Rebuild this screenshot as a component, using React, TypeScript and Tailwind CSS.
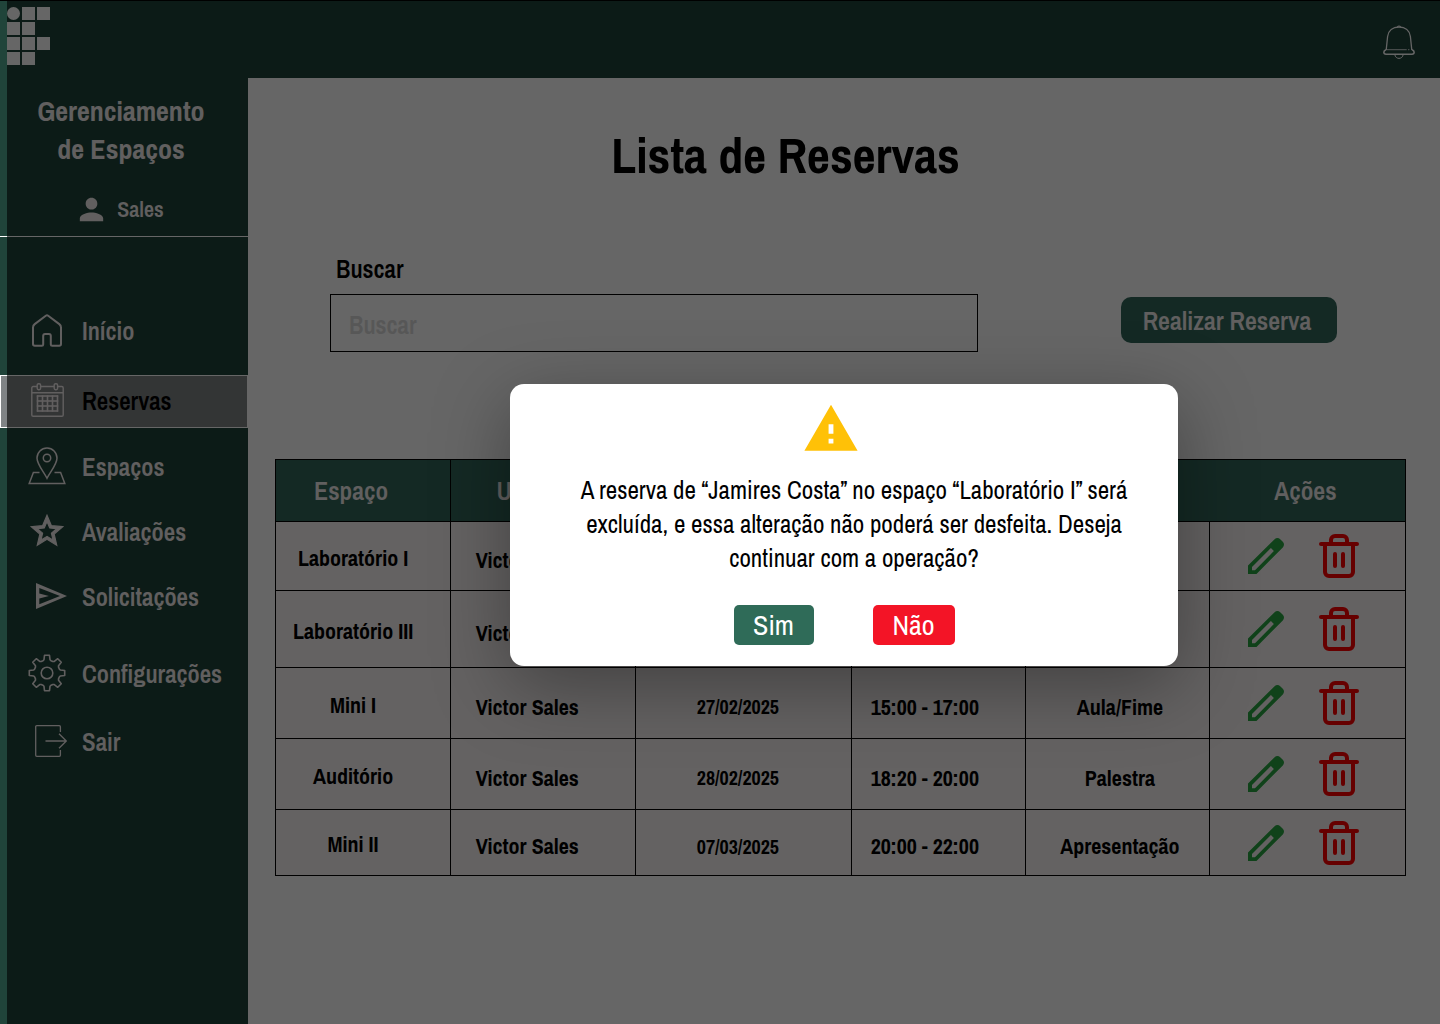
import type { ReactNode } from 'react';
import { MdPerson, MdWarning } from 'react-icons/md';

const LOGO_TILES = [
  [15, 0], [30, 0],
  [0, 15], [15, 15],
  [0, 30], [15, 30], [30, 30],
  [0, 45], [15, 45],
];

function Logo() {
  return (
    <svg width="43" height="58" viewBox="0 0 43 58" fill="currentColor" aria-hidden="true">
      <circle cx="6.5" cy="6.5" r="6.5" />
      {LOGO_TILES.map(([x, y]) => (
        <rect key={`${x}-${y}`} x={x} y={y} width="13" height="13" />
      ))}
    </svg>
  );
}

function BellIcon() {
  return (
    <svg width="32" height="34" viewBox="0 0 32 34" fill="none" stroke="currentColor" aria-hidden="true">
      <path d="M14 2.200c0-1.600 4-1.600 4 0" />
      <path d="M3.200 25 L4.600 11.500C5.300 5.600 9.800 2 16 2s10.700 3.600 11.400 9.500L28.800 25" strokeWidth="1.300" />
      <path d="M3.200 24.700h20.500M25 24.700h1.400" strokeWidth=".8" />
      <path d="M3 24.700C.2 25.700.1 29.200 3 29.200h26c2.900 0 2.800-3.500 0-4.500" strokeWidth="1.600" />
      <path d="M11.800 29.500c.6 5.200 7.800 5.200 8.400 0" />
    </svg>
  );
}

function HomeIcon() {
  return (
    <svg width="30" height="33" viewBox="0 0 30 33" fill="none" stroke="currentColor" strokeWidth="2" strokeLinejoin="round" aria-hidden="true">
      <path d="M1 13.500c0-1.500.5-2.500 1.700-3.400L13.800 1.700c.8-.6 1.600-.6 2.400 0l11.100 8.400c1.200.9 1.700 1.900 1.700 3.400V30c0 1.200-.6 1.800-1.800 1.800h-7c-1 0-1.400-.5-1.400-1.400v-8.600c0-1.300-.6-1.900-1.900-1.900h-3.800c-1.300 0-1.900.6-1.900 1.900v8.600c0 .9-.4 1.400-1.400 1.400h-7C1.600 31.800 1 31.200 1 30z" />
    </svg>
  );
}

const CALENDAR_COLUMNS = [6.5, 11.5, 16.5, 21.5, 26.5];
const CALENDAR_ROWS = [13, 18, 23, 28];

function CalendarIcon() {
  return (
    <svg width="33" height="34" viewBox="0 0 33 34" fill="none" stroke="currentColor" aria-hidden="true">
      <path d="M6 3.500H2.200c-.8 0-1.400.6-1.400 1.400v27c0 .8.6 1.300 1.400 1.300h28.600c.8 0 1.400-.5 1.400-1.300v-27c0-.8-.6-1.400-1.400-1.400h-4M10 3.500h13M1 9.800h31" strokeWidth="1.400" />
      <rect x="6.200" y=".7" width="3.400" height="6" rx="1.400" strokeWidth="1.400" />
      <rect x="23.200" y=".7" width="3.400" height="6" rx="1.400" strokeWidth="1.400" />
      {CALENDAR_COLUMNS.map((x) => (
        <path key={x} d={`M${x} 12.400V28.600`} strokeWidth="1.600" />
      ))}
      {CALENDAR_ROWS.map((y) => (
        <path key={y} d={`M5.800 ${y}H27.200`} strokeWidth="1.600" />
      ))}
    </svg>
  );
}

function MapPinIcon() {
  return (
    <svg width="38" height="38" viewBox="0 0 38 38" fill="none" stroke="currentColor" strokeWidth="1.500" aria-hidden="true">
      <path d="M19 31.300C16 25 9 17.500 9 11a10 10 0 0 1 20 0c0 6.500-7 14-10 20.300z" />
      <circle cx="19" cy="11" r="3.700" />
      <path d="M11.500 25.500H5.400L1.200 36.600h35.600l-4.200-11.100h-6.100" />
    </svg>
  );
}

function StarIcon() {
  return (
    <svg width="38" height="38" viewBox="0 0 24 24" fill="currentColor" stroke="currentColor" strokeWidth=".7" aria-hidden="true">
      <path d="M22 9.240l-7.190-.62L12 2 9.190 8.630 2 9.240l5.460 4.730L5.820 21 12 17.270 18.180 21l-1.630-7.030L22 9.240zM12 15.400l-3.760 2.270 1-4.280-3.320-2.880 4.380-.38L12 6.100l1.710 4.040 4.380.38-3.320 2.880 1 4.280L12 15.400z" />
    </svg>
  );
}

function SendIcon() {
  return (
    <svg width="31" height="26" viewBox="0 0 31 26" fill="currentColor" fillRule="evenodd" aria-hidden="true">
      <path d="M0 0l31 13L0 26zM3.300 5v5.600l9.600 2.400-9.600 2.400v5.800L24 13z" />
    </svg>
  );
}

function gearPath(center: number) {
  const points: string[] = [];
  for (let i = 0; i < 8; i += 1) {
    const a = (i * Math.PI) / 4;
    const at = (side: number, radius: number) =>
      `${(center + side * Math.cos(a) + radius * Math.sin(a)).toFixed(2)} ${(center + side * Math.sin(a) - radius * Math.cos(a)).toFixed(2)}`;
    points.push(`${i === 0 ? 'M' : 'L'}${at(-4, 12.3)}`);
    points.push(`L${at(-3, 13.3)} L${at(-2.5, 17.7)} L${at(2.5, 17.7)} L${at(3, 13.3)} L${at(4, 12.3)}`);
  }
  return `${points.join(' ')}Z`;
}

function GearIcon() {
  return (
    <svg width="38" height="38" viewBox="0 0 38 38" fill="none" stroke="currentColor" strokeWidth="1.600" strokeLinejoin="round" aria-hidden="true">
      <path d={gearPath(19)} />
      <circle cx="19" cy="19" r="5.800" />
    </svg>
  );
}

function ExitIcon() {
  return (
    <svg width="32" height="32" viewBox="0 0 32 32" fill="none" stroke="currentColor" strokeWidth="1.300" aria-hidden="true">
      <path d="M25.400 7V1.800c0-.7-.4-1.100-1.100-1.100H1.800C1.100.7.700 1.100.700 1.800v28.400c0 .7.4 1.100 1.100 1.100h22.500c.7 0 1.100-.4 1.100-1.100V25M10.500 16H31M24 8.700l7.300 7.300-7.300 7.300" />
    </svg>
  );
}

function PencilIcon() {
  return (
    <svg width="36" height="36" viewBox="0 0 36 36" fill="currentColor" fillRule="evenodd" aria-hidden="true">
      <path d="M0 36v-8.500L26.600 1.200C28.200-.3 30.600-.4 32.200 1.200l2.600 2.600c1.600 1.600 1.600 3.900 0 5.600L8.500 36zM4 32.300h3L25.900 13l-3-3L4 29z" />
    </svg>
  );
}

function TrashIcon() {
  return (
    <svg width="40" height="44" viewBox="0 0 40 44" fill="none" stroke="currentColor" strokeWidth="4" strokeLinecap="round" aria-hidden="true">
      <path d="M2 10h36M6 10v28a4 4 0 0 0 4 4h20a4 4 0 0 0 4-4V10M12 10V6a4 4 0 0 1 4-4h8a4 4 0 0 1 4 4v4M16 20v12M24 20v12" />
    </svg>
  );
}

type NavItem = { label: string; icon: ReactNode; row: string; active?: boolean };

const NAV: NavItem[] = [
  { label: 'Início', icon: <HomeIcon />, row: 'h-[65px] mb-[11px]' },
  { label: 'Reservas', icon: <CalendarIcon />, row: 'h-[53px] mb-[7px]', active: true },
  { label: 'Espaços', icon: <MapPinIcon />, row: 'h-[65px]' },
  { label: 'Avaliações', icon: <StarIcon />, row: 'h-[65px]' },
  { label: 'Solicitações', icon: <span className="pl-2"><SendIcon /></span>, row: 'h-[65px]' },
  { label: 'Configurações', icon: <GearIcon />, row: 'h-[65px] mt-3' },
  { label: 'Sair', icon: <span className="pl-2"><ExitIcon /></span>, row: 'h-[65px] mt-[3px]' },
];

type Reservation = { room: string; user: string; date: string; time: string; reason: string; row: string };

const RESERVATIONS: Reservation[] = [
  { room: 'Laboratório I', user: 'Victor Sales', date: '', time: '', reason: '', row: 'h-[69px]' },
  { room: 'Laboratório III', user: 'Victor Sales', date: '', time: '', reason: '', row: 'h-[77px]' },
  { room: 'Mini I', user: 'Victor Sales', date: '27/02/2025', time: '15:00 - 17:00', reason: 'Aula/Fime', row: 'h-[71px]' },
  { room: 'Auditório', user: 'Victor Sales', date: '28/02/2025', time: '18:20 - 20:00', reason: 'Palestra', row: 'h-[71px]' },
  { room: 'Mini II', user: 'Victor Sales', date: '07/03/2025', time: '20:00 - 22:00', reason: 'Apresentação', row: 'h-[66px]' },
];

function Sidebar() {
  return (
    <aside className="w-[248px] shrink-0 bg-[#20443a] text-[#f3eeee]">
      <div className="flex h-[159px] flex-col items-center border-b border-white pt-[14px]">
        <p className="pr-1.5 text-center text-[28px] leading-[38px] font-bold">
          Gerenciamento
          <br />
          de Espaços
        </p>
        <p className="mt-[23px] flex items-center gap-2 pr-2.5 text-[22px] leading-[36px] font-semibold">
          <MdPerson size={35} aria-hidden="true" />
          Sales
        </p>
      </div>
      <nav className="pt-[62px]">
        <ul>
          {NAV.map((item) => (
            <li key={item.label} className={item.row}>
              <a
                href="#"
                aria-current={item.active ? 'page' : undefined}
                className={
                  item.active
                    ? 'flex h-full items-center border border-white bg-[#808486] pl-[27px] text-[25px] font-semibold text-black'
                    : 'flex h-full items-center pl-7 text-[25px] font-semibold'
                }
              >
                <span className="mr-4 flex w-[38px] justify-center pb-[3px] text-[#f3eeee]">{item.icon}</span>
                {item.label}
              </a>
            </li>
          ))}
        </ul>
      </nav>
    </aside>
  );
}

function ReservationTable() {
  return (
    <table className="w-full table-fixed border-collapse border border-black bg-[#fbf6f6] text-center text-[22px] font-bold">
      <colgroup>
        <col className="w-[15.5%]" />
        <col className="w-[16.4%]" />
        <col className="w-[19.1%]" />
        <col className="w-[15.4%]" />
        <col className="w-[16.3%]" />
        <col className="w-[17.3%]" />
      </colgroup>
      <thead>
        <tr className="h-[62px] bg-[#32675a] text-[26px] text-[#f3eeee]">
          <th className="border-r border-black pr-6 font-semibold">Espaço</th>
          <th className="border-r border-black pr-4 font-semibold">Usuário</th>
          <th className="border-r border-black" aria-label="Data" />
          <th className="border-r border-black" aria-label="Horário" />
          <th aria-label="Motivo" />
          <th className="pr-1 font-semibold">Ações</th>
        </tr>
      </thead>
      <tbody>
        {RESERVATIONS.map((r) => (
          <tr key={r.room} className={r.row}>
            <td className="border border-black pt-1 pr-5">{r.room}</td>
            <td className="border border-black pt-2 pr-8">{r.user}</td>
            <td className="border border-black pt-2 pr-3 text-[20px]">{r.date}</td>
            <td className="border border-black pt-2 pr-7">{r.time}</td>
            <td className="border border-black pt-2 pl-1">{r.reason}</td>
            <td className="border border-black">
              <div className="flex items-center justify-center gap-[35px] pr-2">
                <button type="button" aria-label="Editar reserva" className="text-[#2aa542]">
                  <PencilIcon />
                </button>
                <button type="button" aria-label="Excluir reserva" className="text-[#ff0000]">
                  <TrashIcon />
                </button>
              </div>
            </td>
          </tr>
        ))}
      </tbody>
    </table>
  );
}

function ConfirmDialog() {
  return (
    <div className="absolute inset-y-0 right-0 left-[7px] flex items-center justify-center bg-black/60 pt-[26px] pl-[241px]">
      <div
        role="alertdialog"
        aria-modal="true"
        aria-describedby="confirm-text"
        className="flex w-[668px] flex-col items-center rounded-[14px] bg-white px-10 pt-4 pb-[21px] shadow-[0_19px_76px_rgba(0,0,0,0.35)]"
      >
        <MdWarning size={58} className="mr-[26px] text-[#ffc107]" aria-hidden="true" />
        <p id="confirm-text" className="mt-[15px] pl-5 text-center text-[25px] leading-[34px] text-black">
          A reserva de “Jamires Costa” no espaço “Laboratório I” será excluída, e essa alteração não poderá ser
          desfeita. Deseja continuar com a operação?
        </p>
        <div className="mt-[30px] flex gap-[59px] text-[28px] leading-[40px] text-white">
          <button type="button" className="h-10 w-20 rounded-[5px] bg-[#2f6b58]">
            Sim
          </button>
          <button type="button" className="h-10 w-[82px] rounded-[5px] bg-[#f31426]">
            Não
          </button>
        </div>
      </div>
    </div>
  );
}

export default function App() {
  return (
    <div className="relative flex min-h-screen flex-col bg-white font-['Archivo_Narrow','Liberation_Sans_Narrow','Arial_Narrow',Roboto,sans-serif] text-black">
      <header className="flex h-[78px] items-start justify-between border-t border-black bg-[#20443a] pt-[6px] pr-[25px] pl-[7px] text-white">
        <Logo />
        <button type="button" aria-label="Notificações" className="mt-[18px]">
          <BellIcon />
        </button>
      </header>
      <div className="flex flex-1">
        <Sidebar />
        <main className="flex-1 pt-[47px] pr-[34px] pl-[27px]">
          <h1 className="pr-[110px] text-center text-[50px] leading-[60px] font-bold">Lista de Reservas</h1>
          <div className="mt-[67px] flex items-end gap-[143px] pr-[69px] pl-[55px]">
            <div className="flex flex-1 flex-col">
              <label htmlFor="search" className="pl-[6px] text-[25px] leading-[34px] font-semibold">
                Buscar
              </label>
              <input
                id="search"
                type="search"
                placeholder="Buscar"
                className="mt-2 h-[58px] w-full border border-black bg-transparent px-[18px] pt-1 text-[25px] font-semibold placeholder:text-[#d9d9d9]"
              />
            </div>
            <button type="button" className="mb-[9px] h-[46px] w-[216px] rounded-[10px] bg-[#32675a] pr-1 text-[26px] font-semibold text-[#f3eeee]">
              Realizar Reserva
            </button>
          </div>
          <div className="mt-[107px]">
            <ReservationTable />
          </div>
        </main>
      </div>
      <ConfirmDialog />
    </div>
  );
}
